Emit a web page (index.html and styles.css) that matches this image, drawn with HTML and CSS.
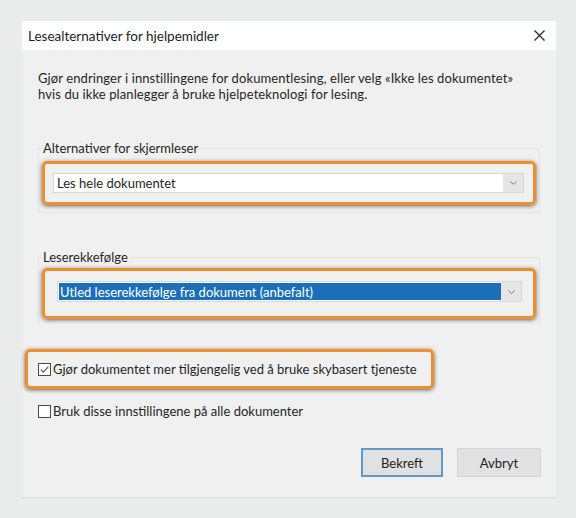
FILE: index.html
```html
<!DOCTYPE html>
<html lang="no">
<head>
<meta charset="utf-8">
<title>Lesealternativer for hjelpemidler</title>
<link rel="stylesheet" href="styles.css">
</head>
<body>
<div class="dialog">
  <div class="titlebar">
    <span class="title">Lesealternativer for hjelpemidler</span>
    <svg class="close" viewBox="0 0 11 11" aria-label="Lukk"><path d="M0.5 0.5 L10.5 10.5 M10.5 0.5 L0.5 10.5" /></svg>
  </div>
  <div class="content">
    <p class="intro">Gjør endringer i innstillingene for dokumentlesing, eller velg «Ikke les dokumentet»<br>hvis du ikke planlegger å bruke hjelpeteknologi for lesing.</p>

    <fieldset class="group group-reader">
      <legend>Alternativer for skjermleser</legend>
      <div class="highlight hl-reader">
        <div class="select">
          <span class="value">Les hele dokumentet</span>
          <span class="arrow"><svg viewBox="0 0 7 4"><polyline points="0.5,0.5 3.5,3.5 6.5,0.5"/></svg></span>
        </div>
      </div>
    </fieldset>

    <fieldset class="group group-order">
      <legend>Leserekkefølge</legend>
      <div class="highlight hl-order">
        <div class="select select-order">
          <span class="value value-selected">Utled leserekkefølge fra dokument (anbefalt)</span>
          <span class="arrow"><svg viewBox="0 0 7 4"><polyline points="0.5,0.5 3.5,3.5 6.5,0.5"/></svg></span>
        </div>
      </div>
    </fieldset>

    <div class="options">
      <div class="highlight hl-check">
        <label class="check"><span class="box"><svg viewBox="0 0 11 11"><polyline points="1.8,5.6 4.3,8.2 9.4,2.6"/></svg></span>Gjør dokumentet mer tilgjengelig ved å bruke skybasert tjeneste</label>
      </div>
      <label class="check check-plain"><span class="box"></span>Bruk disse innstillingene på alle dokumenter</label>
    </div>

    <div class="buttons">
      <button class="btn btn-primary">Bekreft</button>
      <button class="btn btn-secondary">Avbryt</button>
    </div>
  </div>
</div>
</body>
</html>
```

FILE: styles.css
```css
* { box-sizing: border-box; }

body {
  margin: 0;
  background: #eaecec;
  font-family: Lato, "Open Sans", "Liberation Sans", sans-serif;
  font-size: 13px;
  color: #262626;
}

.dialog {
  margin: 21px 0 0 22px;
  width: 534px;
  height: 477px;
  background: #f0f0f0;
  border-bottom: 1px solid #d9d9d9;
  display: flex;
  flex-direction: column;
}

.titlebar {
  height: 29px;
  flex: none;
  background: #ffffff;
  display: flex;
  align-items: center;
  justify-content: space-between;
  padding: 0 11px 0 6px;
}

.title {
  font-size: 13.5px;
  line-height: 16px;
  color: #222;
}

.close {
  width: 11px;
  height: 11px;
  fill: none;
  stroke: #2e2e2e;
  stroke-width: 1.4;
}

.content {
  padding: 20px 16px 0;
  display: flex;
  flex-direction: column;
}

.intro {
  margin: 0;
  line-height: 16px;
  letter-spacing: 0.1px;
}

.group {
  margin: 38px 0 0;
  padding: 5px 3px 7px;
  border: 1px solid #e4e4e4;
  min-width: 0;
}

.group legend {
  padding: 0 1px;
  line-height: 16px;
}

.group-order {
  margin-top: 36px;
  padding-top: 3px;
  border-bottom-color: transparent;
}

.highlight {
  border: 3px solid #ef8f2b;
  border-radius: 5px;
  box-shadow: 0 1px 4px rgba(0, 0, 0, 0.6);
}

.hl-reader {
  padding: 9px 9px 9px 8px;
}

.hl-order {
  padding: 10px 11px 14px 12px;
}

.select {
  height: 20px;
  border: 1px solid #d8d8d8;
  background: #ffffff;
  display: flex;
}

.select-order {
  height: 21px;
}

.value {
  flex: 1;
  padding-left: 3px;
  line-height: 18px;
  white-space: nowrap;
}

.value-selected {
  background: #1b6fb8;
  color: #ffffff;
  margin: 1px 0 1px 1px;
  padding-left: 1px;
}

.arrow {
  width: 20px;
  flex: none;
  background: #e5e5e5;
  display: flex;
  align-items: center;
  justify-content: center;
}

.arrow svg {
  width: 7px;
  height: 4px;
  fill: none;
  stroke: #7a7a7a;
  stroke-width: 1;
}

.options {
  margin-top: 22px;
  display: flex;
  flex-direction: column;
  align-items: flex-start;
}

.hl-check {
  margin-left: -13px;
  padding: 9px 14px 9px 10px;
}

.check {
  display: flex;
  align-items: center;
  gap: 2px;
  line-height: 16px;
  white-space: nowrap;
}

.check-plain {
  margin-top: 14px;
}

.box {
  width: 13px;
  height: 13px;
  border: 1px solid #4a4a4a;
  background: #ffffff;
  display: flex;
}

.box svg {
  width: 11px;
  height: 11px;
  fill: none;
  stroke: #555;
  stroke-width: 1.1;
}

.buttons {
  display: flex;
  justify-content: flex-end;
  gap: 14px;
  margin-top: 29px;
  margin-right: -1px;
}

.btn {
  height: 29px;
  padding: 0;
  font: inherit;
  color: #222;
  background: #e1e1e1;
  border: 1px solid #d4d4d4;
}

.btn-primary {
  width: 82px;
  border: 2px solid #5d9bcf;
}

.btn-secondary {
  width: 84px;
}
```
